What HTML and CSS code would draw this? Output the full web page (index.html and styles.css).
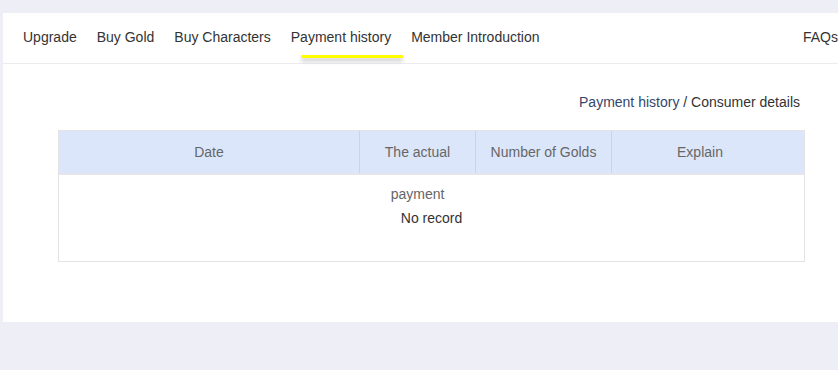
FILE: index.html
```html
<!DOCTYPE html>
<html lang="en">
<head>
<meta charset="utf-8">
<title>Payment history</title>
<link rel="stylesheet" href="styles.css">
</head>
<body>
<div class="panel">
  <nav class="nav">
    <a class="nav-item">Upgrade</a>
    <a class="nav-item">Buy Gold</a>
    <a class="nav-item">Buy Characters</a>
    <a class="nav-item active">Payment history<span class="underline"></span></a>
    <a class="nav-item">Member Introduction</a>
    <a class="nav-item faq">FAQs</a>
  </nav>
  <div class="content">
    <div class="crumbs"><a class="crumb-link">Payment history</a> / Consumer details</div>
    <div class="table">
      <div class="thead">
        <div class="th c1">Date</div>
        <div class="th c2">The actual payment</div>
        <div class="th c3">Number of Golds</div>
        <div class="th c4">Explain</div>
      </div>
      <div class="tbody">No record</div>
    </div>
  </div>
</div>
</body>
</html>
```
FILE: styles.css
```css
html, body {
  margin: 0;
  padding: 0;
}
body {
  background: #eeeef7;
  font-family: "Liberation Sans", Arial, sans-serif;
  font-size: 14px;
  color: #333;
  overflow: hidden;
  padding-top: 13px;
  height: 357px;
}
.panel {
  margin-left: 3px;
  width: 855px;
  background: #fff;
  padding-bottom: 60px;
}
.nav {
  display: flex;
  height: 50px;
  line-height: 48px;
  padding: 0 20px;
  border-bottom: 1px solid #ebebf0;
}
.nav-item {
  position: relative;
  margin-right: 20px;
  color: #333;
  white-space: nowrap;
}
.nav-item.faq {
  margin-left: auto;
  margin-right: 0;
}
.underline {
  position: absolute;
  left: 10px;
  top: 42px;
  width: 102px;
  height: 3px;
  background: #ffff00;
  border-radius: 1px;
  box-shadow: 0 3px 4px rgba(0, 0, 0, 0.25);
}
.content {
  padding: 0 55px;
}
.crumbs {
  margin-top: 28px;
  height: 20px;
  line-height: 20px;
  text-align: right;
  color: #333;
  width: 742px;
}
.crumb-link {
  color: #34466b;
}
.table {
  margin-top: 18px;
  width: 747px;
  box-sizing: border-box;
  border: 1px solid #e3e3e6;
}
.thead {
  display: grid;
  grid-template-columns: 301px 116px 136px 192px;
  height: 42px;
  background: #dce6fb;
  border-bottom: 2px solid #e6e6ea;
}
.th {
  box-sizing: border-box;
  height: 42px;
  line-height: 42px;
  text-align: center;
  color: #666;
}
.c1, .c2, .c3 {
  border-right: 1px solid #c9d4ea;
}
.c4 {
  padding-right: 16px;
}
.tbody {
  height: 86px;
  line-height: 86px;
  text-align: center;
  color: #333;
}
```
